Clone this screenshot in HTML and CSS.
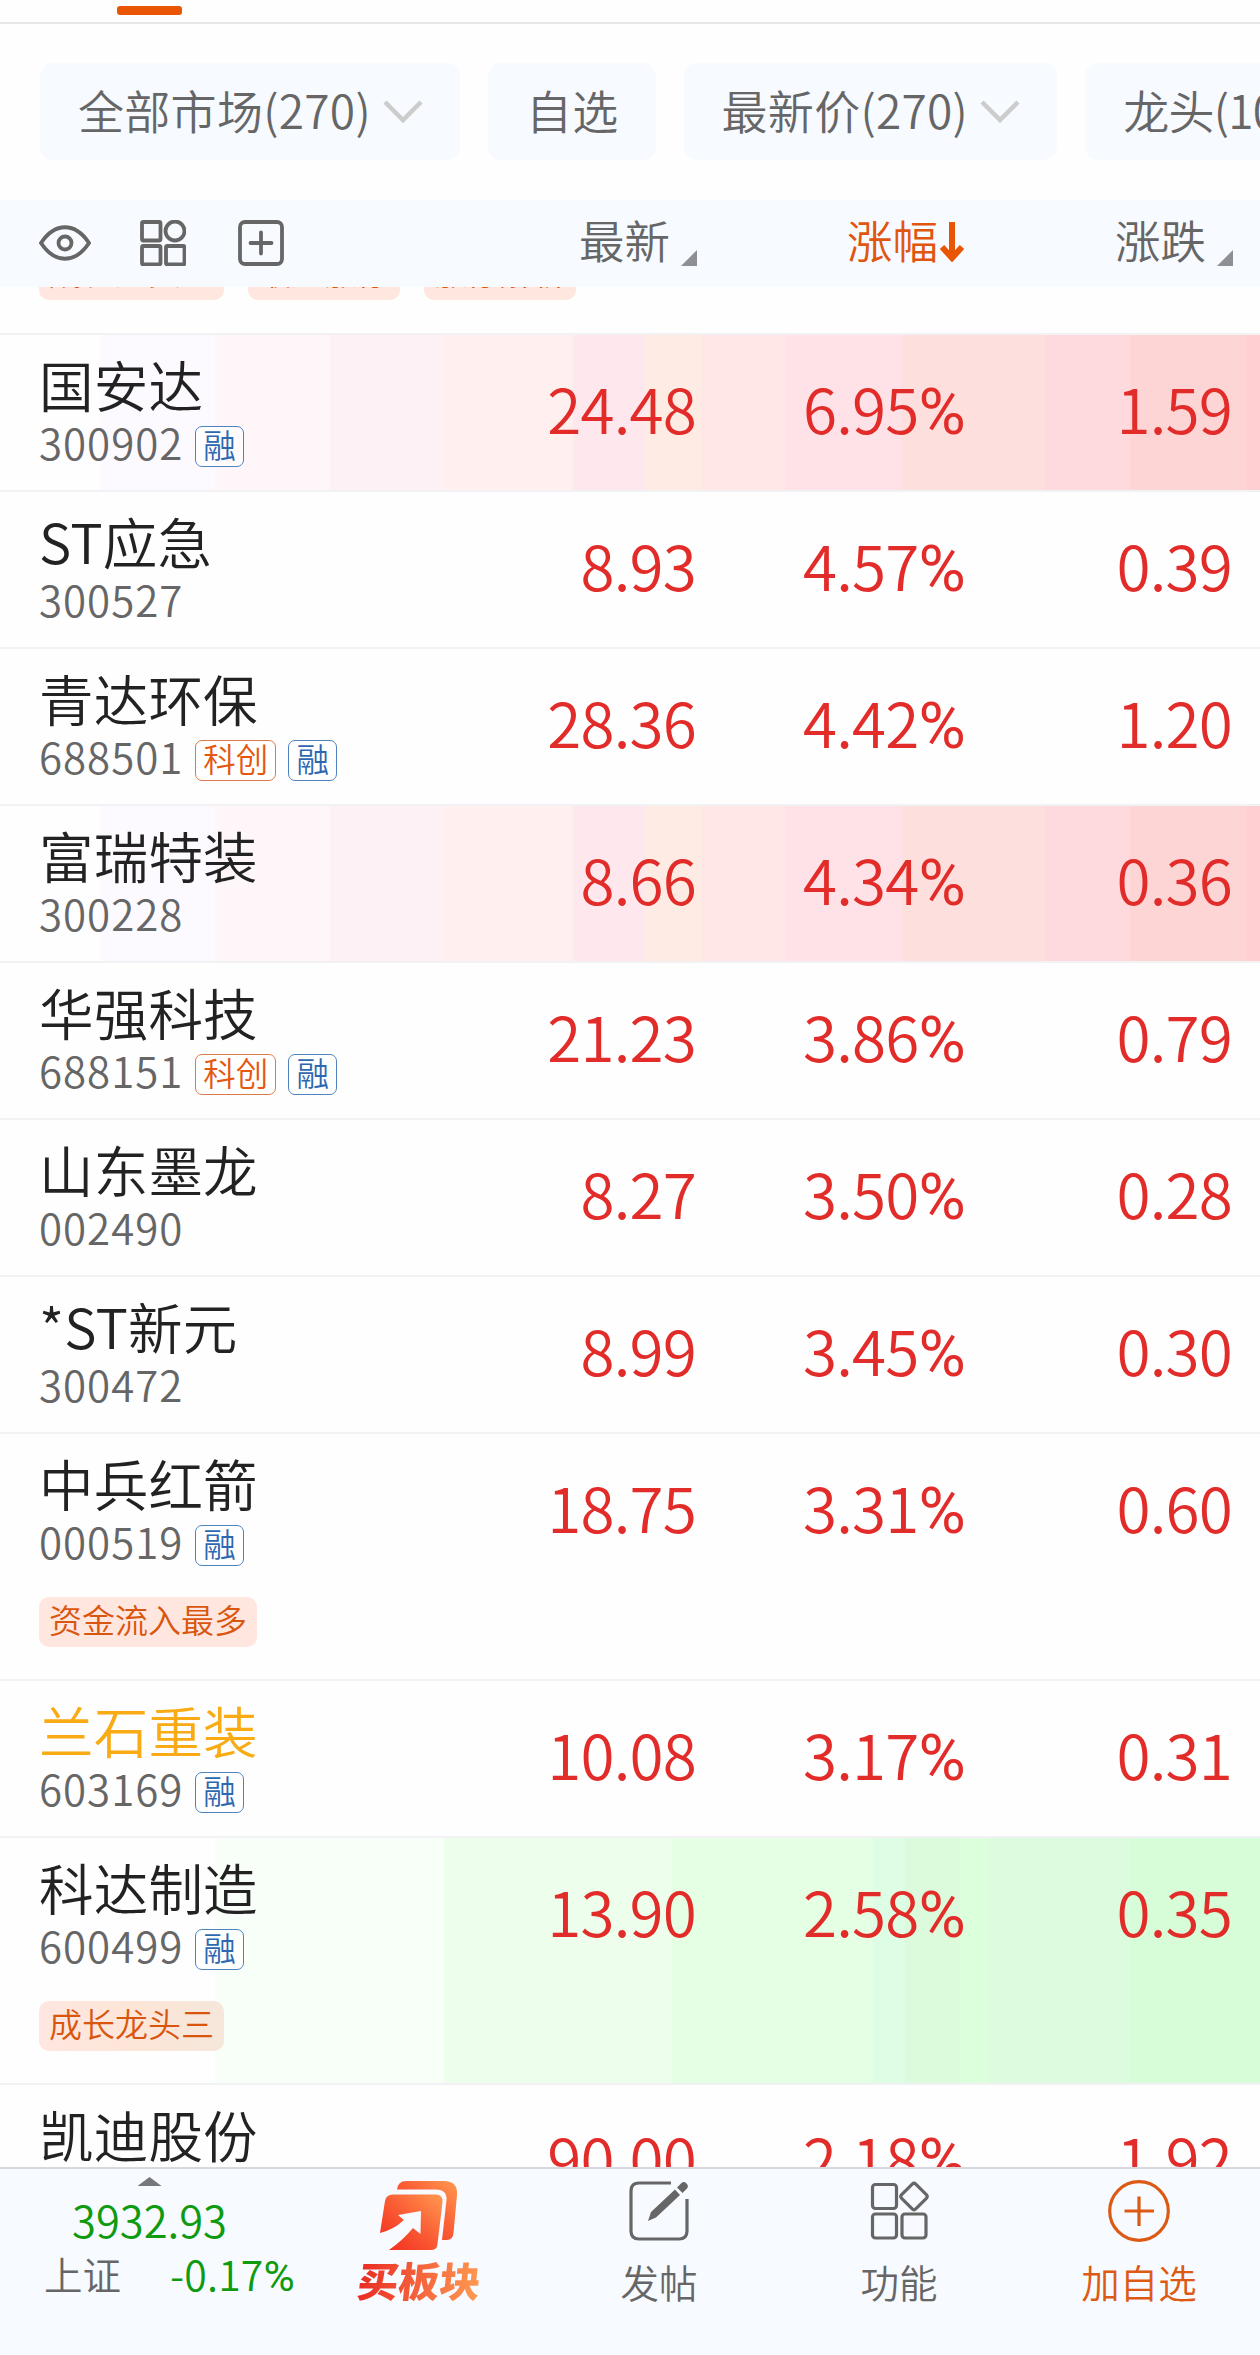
FILE: index.html
```
<!DOCTYPE html>
<html lang="zh-CN">
<head>
<meta charset="utf-8">
<title>板块成分股</title>
<link rel="stylesheet" href="styles.css">
</head>
<body>
<div class="screen">
  <div class="tabs"><span class="tab-line"></span></div>

  <div class="filters">
    <button class="chip"><span>全部市场(270)</span><svg class="chev" viewBox="0 0 40 24"><path d="M2 2 20 20 38 2"/></svg></button>
    <button class="chip"><span>自选</span></button>
    <button class="chip"><span>最新价(270)</span><svg class="chev" viewBox="0 0 40 24"><path d="M2 2 20 20 38 2"/></svg></button>
    <button class="chip last"><span>龙头(10)</span></button>
  </div>

  <div class="head">
    <div class="tools">
      <svg width="52" height="40" viewBox="0 0 52 40"><path d="M2 20C16-1 36-1 50 20C36 41 16 41 2 20Z"/><circle cx="26" cy="20" r="6.5"/></svg>
      <svg width="46" height="46" viewBox="0 0 46 46"><rect x="2" y="2" width="18.500" height="18.500" rx="1.500"/><circle cx="35" cy="11" r="9.500"/><rect x="2" y="26" width="18.500" height="18.500" rx="1.500"/><rect x="26" y="26" width="18.500" height="18.500" rx="1.500"/></svg>
      <svg width="46" height="46" viewBox="0 0 46 46"><rect x="2" y="2" width="42" height="42" rx="5"/><path d="M23 12.500V33.500M12.500 23H33.500" stroke-linecap="round"/></svg>
    </div>
    <div class="col"><span>最新</span><i class="tri"></i></div>
    <div class="col on"><span>涨幅</span><svg class="down" width="24" height="40" viewBox="0 0 24 40"><path d="M12 0V35M2 25 12 36 22 25"/></svg></div>
    <div class="col"><span>涨跌</span><i class="tri"></i></div>
  </div>

  <div class="list">
    <div class="row peek"><div class="pills"><span class="pill">成长龙头一</span><span class="pill">最近涨停</span><span class="pill">涨停解析</span></div></div>
    <div class="row up"><div class="main"><div class="stock"><div class="name">国安达</div><div class="code">300902<b class="tag">融</b></div></div><div class="num">24.48</div><div class="num">6.95<i>%</i></div><div class="num">1.59</div></div></div>
    <div class="row"><div class="main"><div class="stock"><div class="name">ST应急</div><div class="code">300527</div></div><div class="num">8.93</div><div class="num">4.57<i>%</i></div><div class="num">0.39</div></div></div>
    <div class="row"><div class="main"><div class="stock"><div class="name">青达环保</div><div class="code">688501<b class="tag kc">科创</b><b class="tag">融</b></div></div><div class="num">28.36</div><div class="num">4.42<i>%</i></div><div class="num">1.20</div></div></div>
    <div class="row up"><div class="main"><div class="stock"><div class="name">富瑞特装</div><div class="code">300228</div></div><div class="num">8.66</div><div class="num">4.34<i>%</i></div><div class="num">0.36</div></div></div>
    <div class="row"><div class="main"><div class="stock"><div class="name">华强科技</div><div class="code">688151<b class="tag kc">科创</b><b class="tag">融</b></div></div><div class="num">21.23</div><div class="num">3.86<i>%</i></div><div class="num">0.79</div></div></div>
    <div class="row"><div class="main"><div class="stock"><div class="name">山东墨龙</div><div class="code">002490</div></div><div class="num">8.27</div><div class="num">3.50<i>%</i></div><div class="num">0.28</div></div></div>
    <div class="row"><div class="main"><div class="stock"><div class="name">*ST新元</div><div class="code">300472</div></div><div class="num">8.99</div><div class="num">3.45<i>%</i></div><div class="num">0.30</div></div></div>
    <div class="row"><div class="main"><div class="stock"><div class="name">中兵红箭</div><div class="code">000519<b class="tag">融</b></div></div><div class="num">18.75</div><div class="num">3.31<i>%</i></div><div class="num">0.60</div></div><div class="pills"><span class="pill">资金流入最多</span></div></div>
    <div class="row"><div class="main"><div class="stock"><div class="name held">兰石重装</div><div class="code">603169<b class="tag">融</b></div></div><div class="num">10.08</div><div class="num">3.17<i>%</i></div><div class="num">0.31</div></div></div>
    <div class="row dn"><div class="main"><div class="stock"><div class="name">科达制造</div><div class="code">600499<b class="tag">融</b></div></div><div class="num">13.90</div><div class="num">2.58<i>%</i></div><div class="num">0.35</div></div><div class="pills"><span class="pill">成长龙头三</span></div></div>
    <div class="row"><div class="main"><div class="stock"><div class="name">凯迪股份</div></div><div class="num">90.00</div><div class="num">2.18<i>%</i></div><div class="num">1.92</div></div></div>
  </div>

  <div class="bar">
    <div class="index">
      <i class="caret"></i>
      <div class="point">3932.93</div>
      <div class="pct"><span>上证</span><em>-0.17<i>%</i></em></div>
    </div>
    <div class="item">
      <svg class="logo" width="80" height="72" viewBox="0 0 80 72">
        <defs><linearGradient id="g" x1="0" y1="1" x2="1" y2="0"><stop offset="0" stop-color="#f02a1e"/><stop offset=".5" stop-color="#fa5a33"/><stop offset="1" stop-color="#ff9a50"/></linearGradient></defs>
        <path fill="url(#g)" d="M18 9.500Q19 1 27 1H65Q79 1 78 15L74.500 53Q74 60 68 60H63L67.500 20Q68 9.500 57 9.500Z"/>
        <path fill="url(#g)" d="M6 21Q7 14.500 14 14.500H57Q64 14.500 63.500 22L58.500 64Q58 70 52 70H10Q24 60 34 48L41.500 54L42 31L19 35L25 40Q14 50 1 53Z"/>
      </svg>
      <span class="brand">买板块</span>
    </div>
    <div class="item">
      <svg class="line" width="60" height="60" viewBox="0 0 60 60"><path d="M42 2H10Q2 2 2 10V50Q2 58 10 58H50Q58 58 58 50V18"/><path class="solid" d="M19 40 22 31 46 8.500 51 14 27 36.500ZM48 6.500 52.500 2Q55 0 57.500 2.500Q60 5 58 7.500L53.500 12Z"/></svg>
      <span>发帖</span>
    </div>
    <div class="item">
      <svg class="line" width="60" height="60" viewBox="0 0 60 60"><rect x="3.500" y="3.500" width="24" height="24" rx="3"/><rect x="3.500" y="33" width="24" height="24" rx="3"/><rect x="33" y="33" width="24" height="24" rx="3"/><rect x="35" y="5.500" width="20" height="20" rx="2.500" transform="rotate(45 45 15.500)"/></svg>
      <span>功能</span>
    </div>
    <div class="item on">
      <svg class="line" width="62" height="62" viewBox="0 0 62 62"><circle cx="31" cy="31" r="29.300"/><path d="M31 16.500V46M16.500 31H46"/></svg>
      <span>加自选</span>
    </div>
  </div>
</div>
</body>
</html>
```
FILE: styles.css
```
* { box-sizing: border-box; }
body { margin: 0; background: #fff; font-family: "Noto Sans CJK SC DemiLight", "Noto Sans CJK SC", sans-serif; font-weight: 350; color: #222; }
.screen { width: 1260px; height: 2355px; overflow: hidden; display: flex; flex-direction: column; background: #fefefe; }

.tabs { height: 24px; flex: none; border-bottom: 2px solid #e6e6e8; padding: 6px 0 0 117px; }
.tab-line { display: block; width: 65px; height: 9px; border-radius: 3px; background: #ea5504; }

.filters { flex: none; height: 176px; padding: 39px 0 0 40px; display: flex; gap: 28px; align-items: flex-start; overflow: hidden; }
.chip { flex: none; height: 97px; border: 0; border-radius: 13px; background: #f7faff; padding: 0 37px 0 38px; display: flex; align-items: center; gap: 12px; font: inherit; font-size: 46px; letter-spacing: .3px; color: #666; white-space: nowrap; }
.chip span { line-height: 93px; padding-bottom: 4px; }
.chip.last { letter-spacing: -.7px; }
.chev { width: 40px; height: 24px; fill: none; stroke: #ccc; stroke-width: 4.500; }

.head { flex: none; height: 87px; background: #f7faff; display: flex; align-items: center; font-size: 45.500px; color: #666; }
.tools { width: 431px; padding: 0 0 2px 39px; display: flex; align-items: center; gap: 49px; }
.tools svg { fill: none; stroke: #666; stroke-width: 3.800; }
.tools svg:last-child { margin-left: 3px; }
.col { width: 267px; display: flex; justify-content: flex-end; align-items: center; }
.tools + .col { padding-right: 1px; }
.col:last-child { width: 268px; }
.col.on { padding-right: 1px; }
.col span { line-height: 79px; padding-bottom: 8px; }
.col.on { color: #e0560f; }
.tri { width: 16px; height: 16px; margin: 29px 0 0 11px; background: #8e8f95; clip-path: polygon(100% 0, 100% 100%, 0 100%); }
.down { margin: 0 0 3px 2px; fill: none; stroke: #ea5504; stroke-width: 6; }

.list { flex: 1; min-height: 0; overflow: hidden; }
.row { border-bottom: 2px solid #f2f2f4; }
.row.peek { height: 48px; display: flex; flex-direction: column; justify-content: flex-end; }
.row.peek .pills { padding-top: 0; padding-bottom: 33px; }
.row.peek .pill { line-height: 42px; }
.main { height: 155px; display: flex; align-items: center; }
.stock { width: 431px; padding-left: 39px; align-self: flex-start; padding-top: 14px; }
.name { font-size: 54.500px; line-height: 70px; height: 71px; letter-spacing: .2px; white-space: nowrap; }
.name.held { color: #f8ab14; }
.code { display: flex; align-items: center; height: 44px; font-size: 42px; line-height: 44px; letter-spacing: 1px; color: #666; }
.tag { height: 41px; margin: 8px 0 0 12px; border: 1.500px solid #4f83bd; border-radius: 7px; padding: 0 7px; font-size: 32.500px; line-height: 34px; font-weight: 350; letter-spacing: 0; color: #2e68b0; background: #fff9; }
.tag.kc { color: #e4570f; border-color: #d97b48; }
.num { width: 267px; height: 86px; text-align: right; font-size: 62px; line-height: 74px; letter-spacing: -.8px; color: #e22c2a; }
.stock + .num { padding-right: 2px; }
.num i, .pct i { font-family: Roboto, sans-serif; font-weight: 400; font-style: normal; font-size: 1.040em; line-height: 1; }
.pills { display: flex; gap: 24px; padding: 8px 0 32px 39px; }
.pill { height: 50px; border-radius: 10px; padding: 0 10px; background: #ffe6de; color: #d9560f; font-size: 33px; line-height: 44px; }

/* stepped tints of rows whose price has just ticked */
.row.up { background: linear-gradient(90deg, #fefefe 100px, #fdfaff 100px 215px, #fef6f8 215px 330px, #fef1f6 330px 444px, #ffefee 444px 573px, #ffe8ed 573px 645px, #feebe3 645px 701px, #ffe7e7 701px 786px, #fee2e7 786px 902px, #fddfdd 902px 1045px, #fedadf 1045px 1130px, #fed5d5 1130px 1246px, #ffcfd2 1246px); }
.row.dn { background: linear-gradient(90deg, #fefefe 215px, #f8fff8 215px 444px, #edffec 444px 672px, #e5ffe5 672px 873px, #defde5 873px 905px, #dcfbdc 905px 960px, #dcffdc 960px 988px, #dcfbdf 988px 1130px, #d6fcd8 1130px); }
.row.dn .pill { background: linear-gradient(90deg, #ffe6e0, #fde6d8 50%, #f5e7da); }

.bar { flex: none; height: 188px; background: #f7faff; border-top: 2px solid #d8d8de; display: flex; color: #666; font-size: 38.500px; }
.index { width: 299px; display: flex; flex-direction: column; align-items: center; padding-top: 8px; }
.caret { width: 24px; height: 9px; background: #77787e; clip-path: polygon(50% 0, 100% 100%, 0 100%); }
.point { font-size: 43.500px; line-height: 60px; margin-top: 4px; color: #109a10; }
.pct { width: 251px; margin-left: 44px; align-self: flex-start; display: flex; justify-content: space-between; line-height: 46px; font-size: 38.500px; }
.pct em { font-style: normal; font-size: 41px; letter-spacing: .2px; color: #109a10; }
.item { width: 240px; display: flex; flex-direction: column; align-items: center; padding-top: 11px; }
.item svg { height: 62px; flex: none; overflow: visible; }
.item .logo { height: 72px; margin-bottom: -10px; }
.item > span { line-height: 50px; margin-top: 14px; }
.line { fill: none; stroke: #666; stroke-width: 3.200; }
.line .solid { fill: #666; stroke: none; }
.item.on { color: #dd5a14; }
.item.on .line { stroke: #dd5a14; }
.item > .brand { margin-top: 12px; font-size: 41px; font-weight: 900; transform: skewX(-6deg); background: linear-gradient(90deg, #ea2a22, #f4633c 50%, #ff9a52); -webkit-background-clip: text; background-clip: text; color: transparent; font-family: "Noto Sans CJK SC", sans-serif; }
```
